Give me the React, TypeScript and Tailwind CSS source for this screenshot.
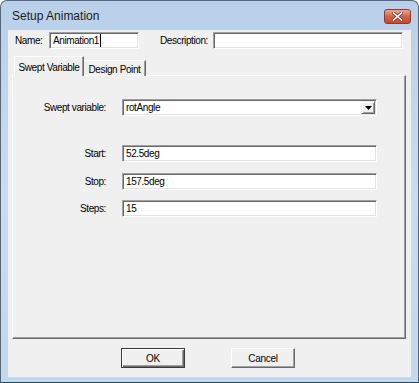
import type { ReactNode } from 'react'

// classic win32 sunken edit box
function Edit({ className, children }: { className: string; children?: ReactNode }) {
  return (
    <div
      className={`relative h-[17px] bg-white border border-t-[#a0a0a0] border-l-[#a0a0a0] border-r-white border-b-white shadow-[inset_1px_1px_0_#696969,inset_-1px_-1px_0_#e3e3e3] flex items-center pl-[3px] text-[10px] tracking-[-0.4px] text-black ${className}`}
    >
      {children}
    </div>
  )
}

function Button({ label, primary }: { label: string; primary?: boolean }) {
  return (
    <div
      className={`w-[64px] h-[20px] flex items-center justify-center text-[10px] tracking-[-0.3px] text-black bg-[#f0f0f0] ${
        primary
          ? 'border border-[#3c3c3c] shadow-[inset_1px_1px_0_#fff,inset_-1px_-1px_0_#696969,inset_-2px_-2px_0_#a0a0a0]'
          : 'border border-t-white border-l-white border-r-[#696969] border-b-[#696969] shadow-[inset_-1px_-1px_0_#a0a0a0]'
      }`}
    >
      {label}
    </div>
  )
}

function Row({ label, value, className }: { label: string; value: string; className: string }) {
  return (
    <div className={`flex items-center ${className}`}>
      <div className="w-[93px] text-right text-[10px] tracking-[-0.4px] text-black">{label}</div>
      <Edit className="ml-[16px] w-[255px]">{value}</Edit>
    </div>
  )
}

export default function App() {
  return (
    <div className="relative w-[419px] h-[383px] flex flex-col rounded-t-[7px] border border-[#55677a] border-b-[#1e4e5c] bg-gradient-to-b from-[#b9d0e9] via-[#cadcef] to-[#c3d7ed] font-['Liberation_Sans',Arial,sans-serif]">
      {/* title bar */}
      <div className="h-[29px] flex items-center pl-[11px] pt-[1px] text-[12px] text-[#1b1b1b]">Setup Animation</div>
      <div className="absolute right-[7px] top-[8px] w-[27px] h-[15px] rounded-[3px] border border-[#8a3a2c] bg-gradient-to-b from-[#eaa896] via-[#d3634c] to-[#c4492f] flex items-center justify-center">
        <svg width="11" height="9" viewBox="0 0 11 9">
          <path d="M1.5 1 L9.5 8 M9.5 1 L1.5 8" stroke="#6b3a30" strokeWidth="3" strokeLinecap="square" />
          <path d="M1.5 1 L9.5 8 M9.5 1 L1.5 8" stroke="#ffffff" strokeWidth="1.6" strokeLinecap="square" />
        </svg>
      </div>

      {/* client area */}
      <div className="mx-[7px] h-[347px] bg-[#f0f0f0] flex flex-col">
        {/* name / description */}
        <div className="flex items-center pt-[2px] pl-[7px] text-[10px] tracking-[-0.4px] text-black">
          <div className="w-[34px]">Name:</div>
          <Edit className="w-[90px]">
            Animation1
            <span className="inline-block w-[1px] h-[13px] bg-black ml-[1px]" />
          </Edit>
          <div className="ml-[21px] w-[53px]">Description:</div>
          <Edit className="w-[190px]" />
        </div>

        {/* tabs */}
        <div className="mt-[7px] ml-[6px] h-[20px] flex items-end relative z-10 -mb-[1px] text-[10px] tracking-[-0.4px] text-black">
          <div className="h-[20px] w-[70px] bg-[#f0f0f0] border-t border-l border-white border-r border-r-[#696969] shadow-[inset_-1px_0_0_#a0a0a0] flex items-start justify-center pt-[3px]">
            Swept Variable
          </div>
          <div className="h-[16px] w-[62px] border-t border-white border-r border-r-[#696969] shadow-[inset_-1px_0_0_#a0a0a0] flex items-start justify-center pt-[1px]">
            Design Point
          </div>
        </div>

        {/* tab panel */}
        <div className="ml-[4px] w-[394px] h-[264px] border border-t-white border-l-white border-r-[#696969] border-b-[#696969] shadow-[inset_-1px_-1px_0_#a0a0a0] flex flex-col pt-[23px]">
          <div className="flex items-center">
            <div className="w-[93px] text-right text-[10px] tracking-[-0.4px] text-black">Swept variable:</div>
            <Edit className="ml-[16px] w-[255px]">
              rotAngle
              <div className="absolute right-[1px] top-[1px] bottom-[1px] w-[14px] bg-[#f0f0f0] border border-t-[#f0f0f0] border-l-[#f0f0f0] border-r-[#696969] border-b-[#696969] shadow-[inset_1px_1px_0_#fff,inset_-1px_-1px_0_#a0a0a0] flex items-center justify-center">
                <svg width="7" height="4" viewBox="0 0 7 4">
                  <path d="M0 0 H7 L3.5 4 Z" fill="#000" />
                </svg>
              </div>
            </Edit>
          </div>
          <Row label="Start:" value="52.5deg" className="mt-[29px]" />
          <Row label="Stop:" value="157.5deg" className="mt-[11px]" />
          <Row label="Steps:" value="15" className="mt-[10px]" />
        </div>

        {/* buttons */}
        <div className="mt-[9px] pl-[113px] flex gap-[46px]">
          <Button label="OK" primary />
          <Button label="Cancel" />
        </div>
      </div>
    </div>
  )
}
